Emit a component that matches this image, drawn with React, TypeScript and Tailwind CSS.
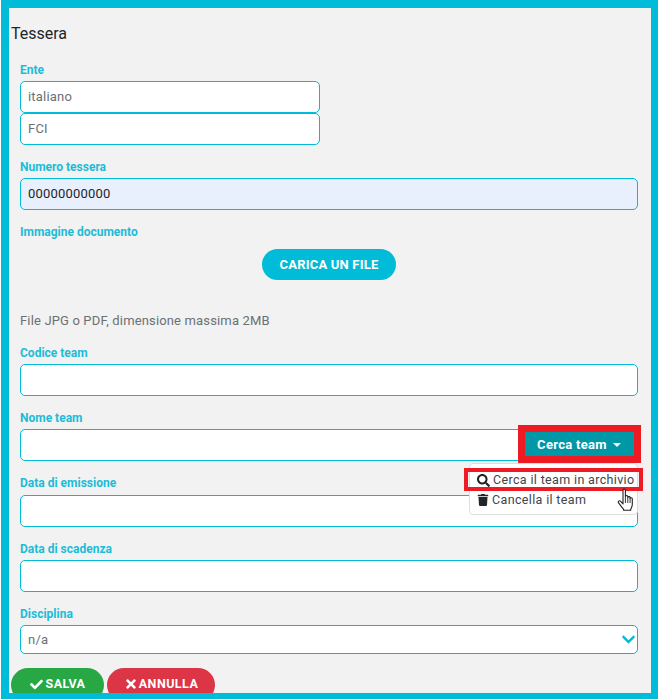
import { FaCheck, FaChevronDown, FaSearch, FaTimes, FaTrash } from 'react-icons/fa';

function Label({ children, className = '' }: { children: React.ReactNode; className?: string }) {
  return <div className={`h-[15px] text-[12px] leading-[15px] font-bold text-[#1cbcd8] ${className}`}>{children}</div>;
}

function Field({ value = '', className = 'bg-white text-[#6b7075]' }: { value?: string; className?: string }) {
  return (
    <div className={`h-[32px] rounded-[5px] border border-[#00bcd9] px-[7px] text-[13px] leading-[30px] tracking-[0.2px] ${className}`}>
      {value}
    </div>
  );
}

function HandCursor() {
  return (
    <svg width="20" height="24" viewBox="0 0 20 24" className="absolute left-[616px] top-[488px]">
      <path
        d="M7 2.2c0-1.5 2.4-1.5 2.4 0v6.3c0-1.3 2.4-1.3 2.4 0v1c0-1.2 2.3-1.2 2.3 0v1c0-1 2.2-1 2.2.3v5.7c0 2.2-.9 3.2-1.6 4.8v1H7.6v-1c-1.2-1.6-3.5-4.1-5-6.4-1-1.5.6-2.8 1.9-1.7L7 16V2.2z"
        fill="#fff"
        stroke="#222"
        strokeWidth="1.1"
        strokeLinejoin="round"
      />
      <path d="M9.4 9v6M11.8 9.5V15M14.1 10.5V15" stroke="#222" strokeWidth="0.9" fill="none" />
    </svg>
  );
}

export default function App() {
  return (
    <div className="h-[699px] w-[658px] bg-white pl-px font-['Roboto',sans-serif]">
      <div className="relative h-full overflow-hidden border-t-[8px] border-r-[7px] border-b-[6px] border-l-[8px] border-[#00bcd9] bg-[#f2f2f2]">
        <div className="pl-[2px] pt-[16px]">
          <h1 className="h-[20px] text-[16px] leading-[20px] text-[#212529]">Tessera</h1>

          <div className="ml-[9px] w-[618px]">
            <Label className="mt-[19px]">Ente</Label>
            <Field value="italiano" className="mt-[3px] w-[300px] bg-white text-[#6b7075]" />
            <Field value="FCI" className="w-[300px] bg-white text-[#6b7075]" />

            <Label className="mt-[15px]">Numero tessera</Label>
            <Field value="00000000000" className="mt-[3px] bg-[#e8f0fe] text-[#212529]" />

            <Label className="mt-[15px]">Immagine documento</Label>
            <div className="mt-[9px] flex justify-center">
              <button className="h-[31px] w-[134px] rounded-full bg-[#00bcd9] text-[13px] font-bold tracking-[0.2px] text-white">
                CARICA UN FILE
              </button>
            </div>
            <p className="mt-[33px] h-[16px] text-[13px] leading-[16px] tracking-[0.15px] text-[#6b7075]">
              File JPG o PDF, dimensione massima 2MB
            </p>

            <Label className="mt-[17px]">Codice team</Label>
            <Field className="mt-[3px] bg-white" />

            <Label className="mt-[15px]">Nome team</Label>
            <Field className="mt-[3px] bg-white" />

            <Label className="mt-[15px]">Data di emissione</Label>
            <Field className="mt-[4px] bg-white" />

            <Label className="mt-[15px]">Data di scadenza</Label>
            <Field className="mt-[3px] bg-white" />

            <Label className="mt-[15px]">Disciplina</Label>
            <div className="mt-[3px] flex h-[29px] items-center justify-between rounded-[5px] border border-[#00bcd9] bg-white pr-[1px] pl-[7px] text-[13px] tracking-[0.2px] text-[#6b7075]">
              n/a
              <FaChevronDown size={15} className="text-[#00bcd9]" />
            </div>
          </div>

          <div className="mt-[14px] flex gap-[3px]">
            <button className="flex h-[34px] w-[93px] items-center justify-center gap-[3px] rounded-full bg-[#28a745] pb-[2px] text-[12.5px] font-bold tracking-[0.4px] text-white">
              <FaCheck size={13} />
              SALVA
            </button>
            <button className="flex h-[34px] w-[108px] items-center justify-center gap-[1px] rounded-full bg-[#dc3545] pb-[2px] text-[12.5px] font-bold tracking-[0.45px] text-white">
              <FaTimes size={14} />
              ANNULLA
            </button>
          </div>
        </div>

        <div className="absolute left-[509px] top-[417px] flex h-[38px] w-[123px] items-center justify-center border-[7px] border-[#ed1c24]">
          <div className="flex h-full w-full items-center justify-center gap-[6px] bg-[#0097a7] pt-[2px] pr-[1px] text-[13px] font-bold tracking-[0.3px] text-white">
            Cerca team
            <span className="h-0 w-0 border-x-[4px] border-t-[4px] border-x-transparent border-t-white" />
          </div>
        </div>

        <div className="absolute left-[460px] top-[455px] h-[52px] w-[169px] rounded-[4px] border border-[#dedede] bg-white text-[12.5px] tracking-[0.35px] text-[#3f444a]">
          <div className="mt-[5px] flex h-[23px] items-center pl-[7px]">
            <FaSearch size={13} className="mr-[3px] shrink-0 text-[#212529]" />
            Cerca il team in archivio
          </div>
          <div className="-mt-[3px] flex h-[22px] items-center pl-[7px]">
            <FaTrash size={12} className="mr-[3px] shrink-0 text-[#212529]" />
            Cancella il team
          </div>
        </div>
        <div className="absolute left-[455px] top-[460px] h-[23px] w-[179px] border-[4px] border-[#ed1c24]" />
        <div className="absolute -top-[8px] -left-[9px]">
          <HandCursor />
        </div>
      </div>
    </div>
  );
}
